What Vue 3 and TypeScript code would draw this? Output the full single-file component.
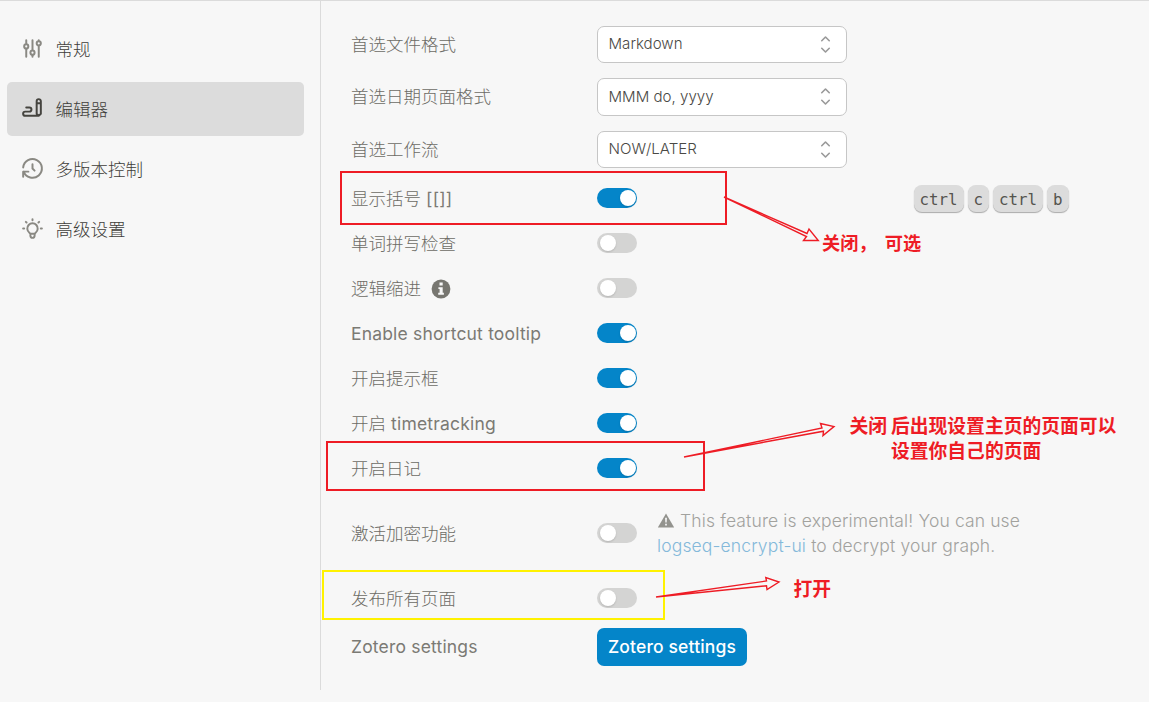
<script setup lang="ts">
import { ref } from 'vue'

interface NavItem {
  label: string
  icon: string
}
interface Row {
  label: string
  latin?: string
  kind: 'select' | 'toggle' | 'button'
  value?: string
  on?: boolean
  info?: boolean
  keys?: string[]
  help?: boolean
}

const nav: NavItem[] = [
  {
    label: '常规',
    icon: 'M4 10a2 2 0 1 0 4 0a2 2 0 1 0-4 0M6 4v4M6 12v8M10 16a2 2 0 1 0 4 0a2 2 0 1 0-4 0M12 4v10M12 18v2M16 7a2 2 0 1 0 4 0a2 2 0 1 0-4 0M18 4v1M18 9v11',
  },
  {
    label: '编辑器',
    icon: 'M20 17V5c0-1.121-.879-2-2-2s-2 .879-2 2v12l2 2l2-2zM16 7h4M18 19H5a2 2 0 1 1 0-4h4a2 2 0 1 0 0-4H6',
  },
  { label: '多版本控制', icon: 'M12 8v4l2 2M3.05 11a9 9 0 1 1 .5 4m-.5 5v-5h5' },
  {
    label: '高级设置',
    icon: 'M3 12h1m8-9v1m8 8h1m-15.4-6.4l.7.7m12.1-.7l-.7.7M9 16a5 5 0 1 1 6 0a3.5 3.5 0 0 0-1 3a2 2 0 0 1-4 0a3.5 3.5 0 0 0-1-3M9.7 17h4.6',
  },
]
const active = ref(1)

const rows = ref<Row[]>([
  { label: '首选文件格式', kind: 'select', value: 'Markdown' },
  { label: '首选日期页面格式', kind: 'select', value: 'MMM do, yyyy' },
  { label: '首选工作流', kind: 'select', value: 'NOW/LATER' },
  { label: '显示括号', latin: ' [[]]', kind: 'toggle', on: true, keys: ['ctrl', 'c', 'ctrl', 'b'] },
  { label: '单词拼写检查', kind: 'toggle', on: false },
  { label: '逻辑缩进', kind: 'toggle', on: false, info: true },
  { label: '', latin: 'Enable shortcut tooltip', kind: 'toggle', on: true },
  { label: '开启提示框', kind: 'toggle', on: true },
  { label: '开启', latin: ' timetracking', kind: 'toggle', on: true },
  { label: '开启日记', kind: 'toggle', on: true },
  { label: '激活加密功能', kind: 'toggle', on: false, help: true },
  { label: '发布所有页面', kind: 'toggle', on: false },
  { label: '', latin: 'Zotero settings', kind: 'button', value: 'Zotero settings' },
])
</script>

<template>
  <div class="settings">
    <aside class="sidebar">
      <a
        v-for="(item, i) in nav"
        :key="item.label"
        class="nav-item"
        :class="{ active: i === active }"
        @click="active = i"
      >
        <svg class="nav-icon" viewBox="0 0 24 24"><path :d="item.icon" /></svg>
        <span>{{ item.label }}</span>
      </a>
    </aside>

    <main class="panel">
      <div v-for="(row, i) in rows" :key="i" class="row" :class="[row.kind, { tall: row.help }]">
        <div class="label">
          <span class="text">{{ row.label }}<span v-if="row.latin" class="latin">{{ row.latin }}</span></span>
          <svg v-if="row.info" class="info" viewBox="0 0 20 20">
            <circle cx="10" cy="10" r="9.4" />
            <path d="M8.500 3.600h3.200v3h-3.200zM7.400 8.200h4.300v5.600h1.200v2H7.200v-2h1.400V10H7.400z" />
          </svg>
        </div>

        <div v-if="row.kind === 'select'" class="select-box">
          <span>{{ row.value }}</span>
          <svg viewBox="0 0 20 20"><path d="M7 7l3-3 3 3M13 13l-3 3-3-3" /></svg>
        </div>

        <button
          v-else-if="row.kind === 'toggle'"
          class="switch"
          :class="{ on: row.on }"
          @click="row.on = !row.on"
        >
          <i></i>
        </button>

        <button v-else class="primary">{{ row.value }}</button>

        <p v-if="row.help" class="help">
          <svg class="warn" viewBox="0 0 18 16">
            <path class="tri" d="M9 .5 17.7 15.5H.3z" />
            <path class="mark" d="M8 5h2l-.3 5.2H8.3zM8.1 11.5h1.8v1.8H8.1z" />
          </svg>
          This feature is experimental! You can use<br />
          <a>logseq-encrypt-ui</a> to decrypt your graph.
        </p>
        <div v-if="row.keys" class="keys">
          <kbd v-for="(k, n) in row.keys" :key="n">{{ k }}</kbd>
        </div>
      </div>
    </main>

    <svg class="marks" viewBox="0 0 1149 702">
      <g class="red">
        <rect x="341" y="172" width="385" height="52" />
        <rect x="327" y="442" width="377" height="48" />
      </g>
      <rect class="yellow" x="323" y="571" width="341" height="48" />
      <g class="arrow">
        <path d="M724 197L807 233.500L809 229L818.300 240.500L803.500 240.500L806.500 236.500Z" />
        <path d="M684 457L822 428L820.500 423.500L834 426.500L823 435.500L823.500 431.200Z" />
        <path d="M656 597L766.500 581L765.800 577.500L779 582L767 589.500L766.500 585.800Z" />
      </g>
    </svg>
    <div class="note n1">关闭，&nbsp;可选</div>
    <div class="note n2">关闭</div>
    <div class="note n3">后出现设置主页的页面可以<br />设置你自己的页面</div>
    <div class="note n4">打开</div>
  </div>
</template>

<style>
body {
  margin: 0;
  background: #f7f7f7;
}
</style>

<style scoped>
* {
  box-sizing: border-box;
}
.settings {
  position: relative;
  display: flex;
  width: 1149px;
  height: 702px;
  overflow: hidden;
  border-top: 1px solid #dbdbdb;
  background: #f7f7f7;
  font: 400 17.5px/26px Inter, 'Noto Sans CJK SC', sans-serif;
  color: #777670;
}
.sidebar {
  width: 320px;
  padding: 21px 16px 0 7px;
  display: flex;
  flex-direction: column;
  gap: 6px;
}
.nav-item {
  display: flex;
  align-items: center;
  gap: 10.4px;
  height: 54px;
  padding-left: 13px;
  border-radius: 5px;
  color: #3f3e3a;
  font-family: 'Noto Sans CJK SC', sans-serif;
  font-weight: 300;
}
.nav-item.active {
  background: #dcdcdc;
}
.nav-icon {
  width: 25px;
  height: 25px;
  margin-top: -2px;
  fill: none;
  stroke: #8a8983;
  stroke-width: 1.9;
  stroke-linecap: round;
  stroke-linejoin: round;
}
.active .nav-icon {
  stroke: #45443f;
}
.panel {
  flex: 1;
  height: 689px;
  border-left: 1px solid #dbdbdb;
  padding: 24.6px 0 0 30px;
  display: flex;
  flex-direction: column;
  gap: 15px;
}
.row {
  display: flex;
  align-items: center;
  height: 30px;
  flex: none;
}
.row.select,
.row.button {
  height: 37.5px;
}
.row.tall {
  height: 70px;
}
.label {
  width: 246px;
  display: flex;
  align-items: center;
  gap: 10px;
}
.row:not(.button) .label {
  padding-top: 1px;
}
.text {
  white-space: pre;
  font-weight: 300;
  color: #6c6b65;
}
.latin {
  font-weight: 400;
  letter-spacing: 0.18px;
  color: #7b7a74;
}
.info {
  width: 20px;
  height: 20px;
}
.info circle {
  fill: #777670;
}
.info path {
  fill: #f7f7f7;
}
.select-box {
  width: 250px;
  height: 37.5px;
  padding: 0 10.500px 0.5px;
  display: flex;
  align-items: center;
  justify-content: space-between;
  border: 1px solid #c6c6c6;
  border-radius: 7px;
  background: #fff;
  color: #4a4945;
  font-size: 15.1px;
  font-weight: 300;
}
.select-box svg {
  width: 25px;
  height: 25px;
  margin-right: -2px;
  fill: none;
  stroke: #9a9a9a;
  stroke-width: 1.3;
  stroke-linecap: round;
  stroke-linejoin: round;
}
.switch {
  display: flex;
  align-items: center;
  width: 40px;
  height: 20px;
  padding: 0 2.500px;
  border: 0;
  border-radius: 10px;
  background: #d4d4d3;
}
.switch i {
  width: 16px;
  height: 16px;
  border-radius: 50%;
  background: #fff;
  box-shadow: 0 1px 2px rgba(0, 0, 0, 0.15);
}
.switch.on {
  justify-content: flex-end;
  padding-right: 1.500px;
  background: #0485c9;
}
.primary {
  width: 150px;
  height: 37.5px;
  padding: 0;
  border: 0;
  border-radius: 7px;
  background: #0485c9;
  color: #fff;
  font: 500 17.5px/26px Inter, sans-serif;
  letter-spacing: 0.15px;
}
.help {
  margin: 0 0 0 20px;
  line-height: 25px;
  font-weight: 300;
  letter-spacing: 0.13px;
  color: #a2a29e;
}
.help a {
  color: #84b9da;
}
.warn {
  width: 18px;
  height: 15px;
  vertical-align: -1px;
}
.tri {
  fill: #93938e;
}
.mark {
  fill: #f7f7f7;
}
.keys {
  display: flex;
  gap: 4px;
  margin-left: 276.5px;
}
kbd {
  height: 27px;
  padding: 0 6px;
  border-radius: 8px;
  background: #dcdcdc;
  box-shadow: 0 1px 1px #aaa;
  color: #55544f;
  font: 15.8px/30px 'DejaVu Sans Mono', monospace;
}
.marks {
  position: absolute;
  left: 0;
  top: -1px;
  width: 1149px;
  height: 702px;
  fill: none;
  pointer-events: none;
}
.red {
  stroke: #ee1c25;
  stroke-width: 2;
}
.yellow {
  stroke: #fff200;
  stroke-width: 2;
}
.arrow {
  stroke: #ee1c25;
  stroke-width: 1.4;
}
.note {
  position: absolute;
  white-space: nowrap;
  color: #ee1c25;
  font: 700 18.8px/25px 'Noto Sans CJK SC', sans-serif;
}
.n1 {
  left: 822px;
  top: 229px;
  font-size: 18.2px;
  word-spacing: 4px;
}
.n2 {
  left: 849.5px;
  top: 411px;
}
.n3 {
  left: 891px;
  top: 411px;
}
.n4 {
  left: 793.5px;
  top: 574px;
}
</style>
